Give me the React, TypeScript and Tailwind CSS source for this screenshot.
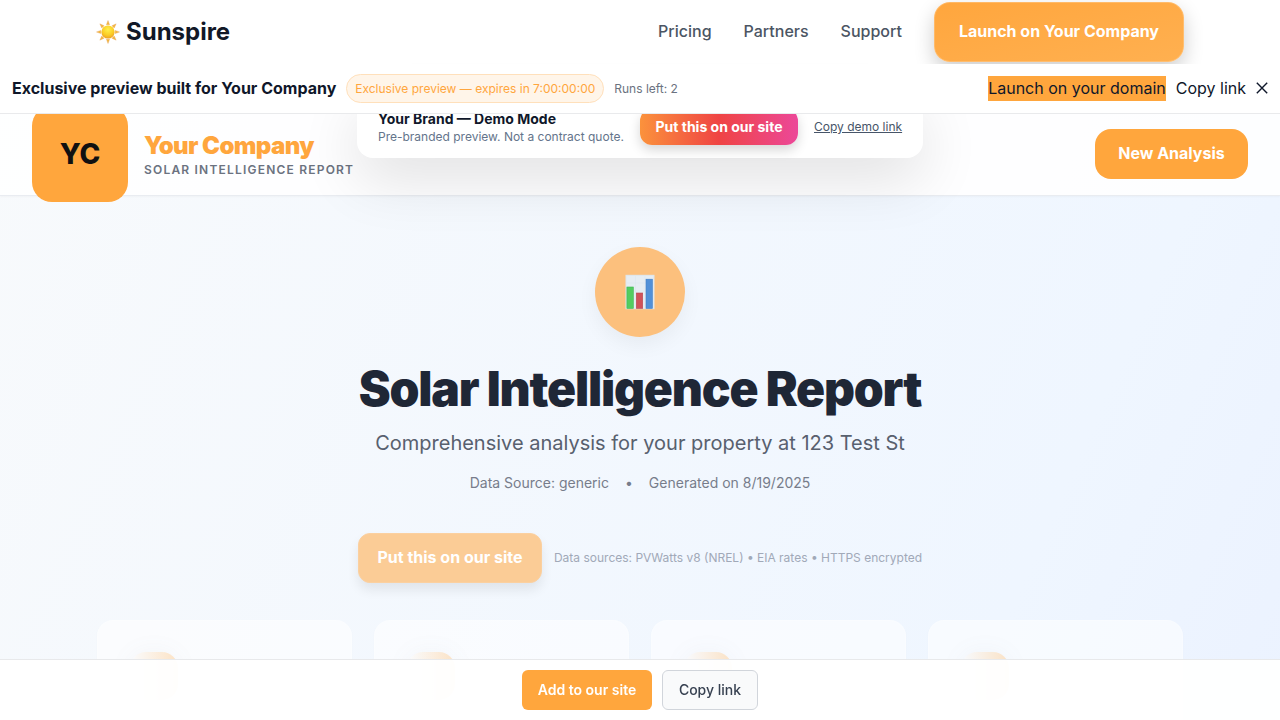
function SunIcon() {
  const rays = [0, 45, 90, 135, 180, 225, 270, 315];
  return (
    <svg viewBox="0 0 24 24" className="h-6 w-6 shrink-0">
      <defs>
        <radialGradient id="sun" cx="50%" cy="32%" r="70%">
          <stop offset="0" stopColor="#fff04a" />
          <stop offset="0.6" stopColor="#fbcd25" />
          <stop offset="1" stopColor="#ec9c25" />
        </radialGradient>
      </defs>
      {rays.map((a) => (
        <path key={a} d="M12 0.5 L13.6 4.8 L10.4 4.8 Z" fill="#f5b83d" stroke="#e3a05c" strokeWidth="0.35" transform={`rotate(${a} 12 12)`} />
      ))}
      <circle cx="12" cy="12" r="6.6" fill="url(#sun)" />
    </svg>
  );
}

function ChartIcon() {
  return (
    <svg viewBox="0 0 30 36" className="h-9 w-[30px]">
      <rect x="0.5" y="0.8" width="29" height="34.4" fill="#dfe5e9" />
      <rect x="1.5" y="1.8" width="27" height="32.4" fill="#e6edf3" />
      <path d="M10.5 2v32M20 2v32M2 9h26M2 17h26M2 25h26" stroke="#dbe5ee" strokeWidth="0.5" />
      <rect x="1.9" y="13" width="6.4" height="21.4" fill="#53cc60" stroke="#3fb653" strokeWidth="0.6" />
      <rect x="11.3" y="19" width="6.4" height="15.4" fill="#d0525a" stroke="#b94650" strokeWidth="0.6" />
      <rect x="21" y="5.2" width="6.4" height="29.2" fill="#5190d8" stroke="#427fc5" strokeWidth="0.6" />
    </svg>
  );
}

function TopNav() {
  return (
    <nav className="flex h-16 shrink-0 items-center justify-between overflow-hidden bg-white px-24">
      <div className="flex items-center gap-1.5 pb-px">
        <SunIcon />
        <span className="text-2xl font-bold text-[#111827]">Sunspire</span>
      </div>
      <div className="flex items-center gap-8 font-medium text-[#4b5563]">
        <a className="pb-0.5">Pricing</a>
        <a className="pb-0.5">Partners</a>
        <a className="pb-0.5">Support</a>
        <button className="h-[60px] rounded-2xl border border-white/20 bg-linear-to-br from-[#ffa63d] to-[#ffb050] bg-origin-border px-6 pb-0.5 font-bold text-white shadow-[0_8px_20px_rgba(0,0,0,0.2)]">
          Launch on Your Company
        </button>
      </div>
    </nav>
  );
}

function PreviewBar() {
  return (
    <div className="relative z-20 flex h-[50px] shrink-0 items-center justify-between border-b border-[#e9eaec] bg-white px-3 text-[#0f172a]">
      <div className="flex items-center gap-2.5">
        <span className="pb-0.5 font-bold">Exclusive preview built for Your Company</span>
        <span className="flex h-[29px] items-center rounded-full border border-[#ffe0bb] bg-[#fff5e9] px-2 text-xs text-[#ffa63d]">
          Exclusive preview — expires in 7:00:00:00
        </span>
        <span className="text-xs text-[#6b7280]">Runs left: 2</span>
      </div>
      <div className="flex items-center gap-2.5">
        <span className="flex h-[25px] items-center bg-[#ffa63d] pb-0.5">Launch on your domain</span>
        <span className="pb-0.5">Copy link</span>
        <svg viewBox="0 0 12 12" className="mb-px h-3 w-3" stroke="#0f172a" strokeWidth="1.4">
          <path d="M0.8 0.8 11.2 11.2M11.2 0.8 0.8 11.2" />
        </svg>
      </div>
    </div>
  );
}

function DemoCard() {
  return (
    <div className="absolute bottom-[37px] left-[357px] z-10 flex h-[62px] w-[566px] items-end rounded-2xl bg-white pb-[13px] pl-[21px] shadow-[0_20px_60px_rgba(0,0,0,0.12)]">
      <div className="w-[262px] shrink-0">
        <div className="text-sm leading-[18px] font-bold text-[#0f172a]">Your Brand — Demo Mode</div>
        <div className="text-xs leading-[17px] text-[#64748b]">Pre-branded preview. Not a contract quote.</div>
      </div>
      <button className="flex h-9 w-[158px] shrink-0 items-center justify-center rounded-xl bg-linear-to-r/srgb from-[#fb923c] via-[#ef4444] to-[#ec4899] text-sm font-bold text-white shadow-[0_5px_12px_rgba(0,0,0,0.16)]">
        Put this on our site
      </button>
      <a className="ml-4 pb-[10px] text-xs leading-4 text-[#475569] underline">Copy demo link</a>
    </div>
  );
}

function BrandHeader() {
  return (
    <header className="relative flex h-[82px] shrink-0 items-center justify-between border-b border-[#e9ecf1] bg-white/90 px-8 pb-0.5 shadow-[0_1px_2px_rgba(0,0,0,0.03)]">
      <div className="flex items-center gap-4">
        <div className="flex h-24 w-24 items-center justify-center rounded-[20px] bg-[#ffa63d] text-[28px] font-extrabold text-[#111111]">YC</div>
        <div className="pt-1">
          <div className="text-2xl leading-7 font-black tracking-[-0.6px] text-[#ffa63d]">Your Company</div>
          <div className="text-xs leading-5 font-semibold tracking-[1.2px] text-[#6b7280]">SOLAR INTELLIGENCE REPORT</div>
        </div>
      </div>
      <button className="h-[50px] w-[153px] rounded-2xl bg-[#ffa63d] pb-0.5 font-bold whitespace-nowrap text-white">New Analysis</button>
      <DemoCard />
    </header>
  );
}

function MetricCard() {
  return (
    <div className="h-40 rounded-2xl border border-white/20 bg-white/55 px-8 pt-8 shadow-[0_1px_3px_rgba(0,0,0,0.02)]">
      <div className="-mt-px h-12 w-12 rounded-2xl bg-linear-to-r from-[#ffa63d]/0 to-[#ffa63d]/30 shadow-[0_0_24px_rgba(120,140,150,0.06)]" />
    </div>
  );
}

function Hero() {
  return (
    <main className="flex grow flex-col items-center pt-[51px]">
      <div className="mb-px flex h-[90px] w-[90px] shrink-0 items-center justify-center rounded-full bg-[#fcc07d] shadow-[0_8px_20px_rgba(0,0,0,0.05)]">
        <ChartIcon />
      </div>
      <h1 className="mt-[26px] text-5xl leading-[50px] font-black tracking-[-1.2px] text-[#1f2736]">Solar Intelligence Report</h1>
      <p className="mt-[15px] text-xl leading-7 text-[#58606e]">Comprehensive analysis for your property at 123 Test St</p>
      <div className="mt-4 flex items-center gap-4 text-sm leading-5 text-[#777d8b]">
        <span>Data Source: generic</span>
        <span>•</span>
        <span>Generated on 8/19/2025</span>
      </div>
      <div className="mt-10 flex h-[50px] shrink-0 items-center gap-3">
        <button className="h-[50px] w-[184px] rounded-xl border border-[#fbd0a0] bg-[#fbcc96] pb-0.5 font-bold text-white shadow-[0_7px_12px_rgba(0,0,0,0.08)]">
          Put this on our site
        </button>
        <span className="text-xs text-[#a1a9b8]">Data sources: PVWatts v8 (NREL) • EIA rates • HTTPS encrypted</span>
      </div>
      <div className="mt-[37px] grid w-[1086px] shrink-0 grid-cols-4 gap-[22px]">
        <MetricCard />
        <MetricCard />
        <MetricCard />
        <MetricCard />
      </div>
    </main>
  );
}

function ActionBar() {
  return (
    <footer className="fixed inset-x-0 bottom-0 z-30 flex h-[61px] items-center justify-center gap-2.5 border-t border-[#e8e9eb] bg-white/95">
      <button className="h-10 w-[130px] rounded-md bg-[#ffa63d] text-sm font-semibold text-white">Add to our site</button>
      <button className="h-10 w-24 rounded-md border border-[#d1d5db] bg-[#f9fafb] text-sm font-medium text-[#374151]">Copy link</button>
    </footer>
  );
}

export default function App() {
  return (
    <div className="flex h-screen w-full flex-col overflow-hidden bg-linear-to-br from-[#f8fafc] via-[#eff6ff] to-[#e0e7ff] bg-[size:100%_2900px] font-['Inter',sans-serif] text-base">
      <TopNav />
      <PreviewBar />
      <BrandHeader />
      <Hero />
      <ActionBar />
    </div>
  );
}
